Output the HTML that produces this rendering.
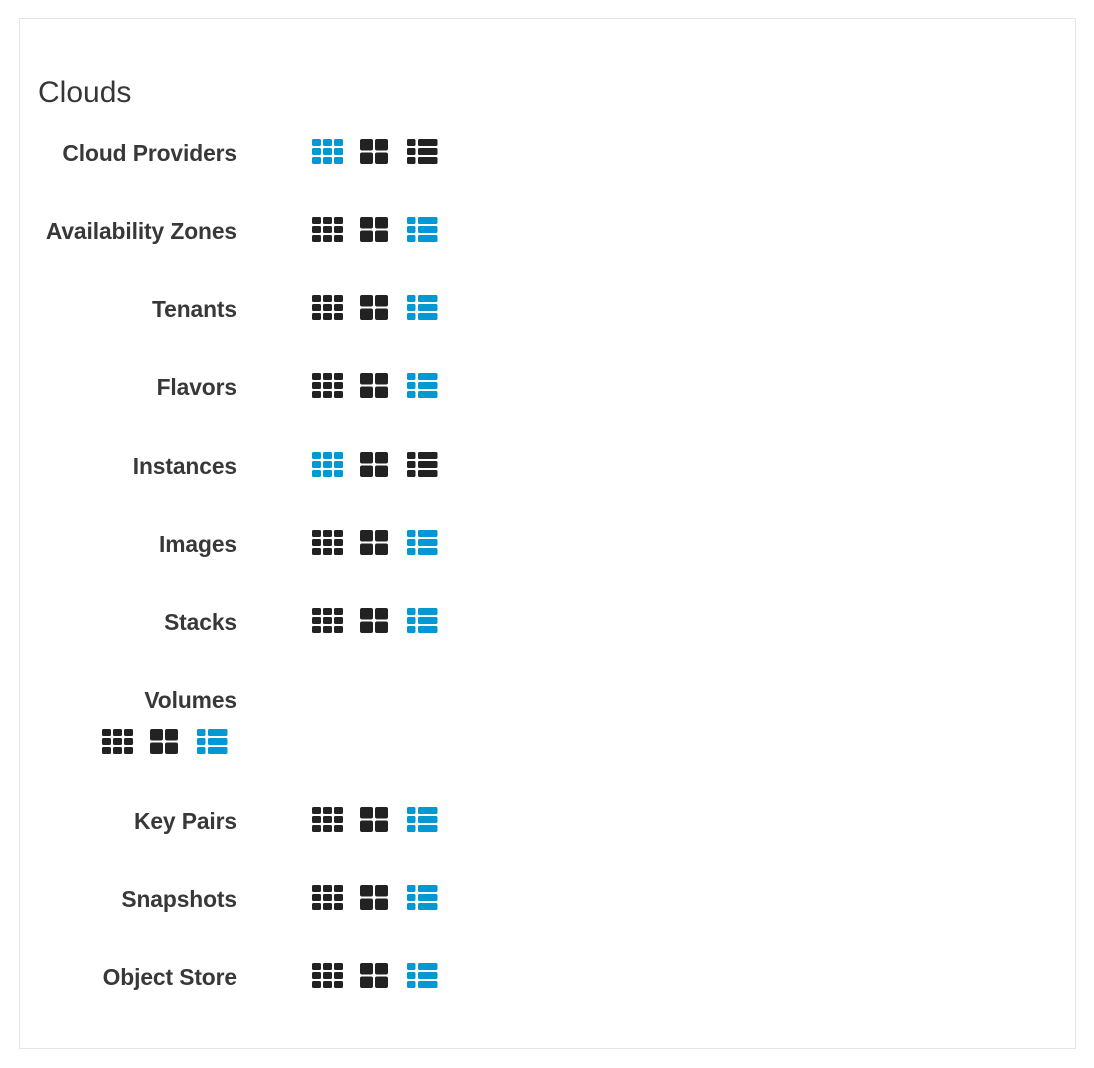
<!DOCTYPE html>
<html><head><meta charset="utf-8"><style>
body{margin:0;background:#fff;width:1094px;height:1068px;position:relative;font-family:"Liberation Sans",sans-serif;color:#363636}
.panel{position:absolute;left:19px;top:18px;width:1055px;height:1029px;border:1px solid #e5e5e5}
h1{position:absolute;left:38px;top:73px;margin:0;font-size:30px;font-weight:normal;line-height:40px;color:#363636}
.lbl{position:absolute;right:857px;font-size:22.8px;font-weight:bold;line-height:30px;white-space:nowrap;letter-spacing:-0.1px;color:#383838;margin-top:2px}
.ic{position:absolute;width:32px;height:25px}
</style></head><body>
<div class="panel"></div>
<h1>Clouds</h1>
<svg width="0" height="0" style="position:absolute">
<defs>
<g id="g3"><rect x="0" y="0" width="9" height="7" rx="1.5"/><rect x="11" y="0" width="9" height="7" rx="1.5"/><rect x="22" y="0" width="9" height="7" rx="1.5"/><rect x="0" y="9" width="9" height="7" rx="1.5"/><rect x="11" y="9" width="9" height="7" rx="1.5"/><rect x="22" y="9" width="9" height="7" rx="1.5"/><rect x="0" y="18" width="9" height="7" rx="1.5"/><rect x="11" y="18" width="9" height="7" rx="1.5"/><rect x="22" y="18" width="9" height="7" rx="1.5"/></g>
<g id="g2"><rect x="0" y="0" width="13" height="11.5" rx="2"/><rect x="15" y="0" width="13" height="11.5" rx="2"/><rect x="0" y="13.5" width="13" height="11.5" rx="2"/><rect x="15" y="13.5" width="13" height="11.5" rx="2"/></g>
<g id="gl"><rect x="0" y="0" width="8.5" height="7" rx="1.5"/><rect x="11" y="0" width="19.5" height="7" rx="1.5"/><rect x="0" y="9" width="8.5" height="7" rx="1.5"/><rect x="11" y="9" width="19.5" height="7" rx="1.5"/><rect x="0" y="18" width="8.5" height="7" rx="1.5"/><rect x="11" y="18" width="19.5" height="7" rx="1.5"/></g>
</defs></svg>

<div class="lbl" style="top:136px">Cloud Providers</div>
<svg class="ic" style="left:312px;top:139px" fill="#0099d3"><use href="#g3"/></svg>
<svg class="ic" style="left:360px;top:139px" fill="#222"><use href="#g2"/></svg>
<svg class="ic" style="left:407px;top:139px" fill="#222"><use href="#gl"/></svg>

<div class="lbl" style="top:214px">Availability Zones</div>
<svg class="ic" style="left:312px;top:217px" fill="#222"><use href="#g3"/></svg>
<svg class="ic" style="left:360px;top:217px" fill="#222"><use href="#g2"/></svg>
<svg class="ic" style="left:407px;top:217px" fill="#0099d3"><use href="#gl"/></svg>

<div class="lbl" style="top:292px">Tenants</div>
<svg class="ic" style="left:312px;top:295px" fill="#222"><use href="#g3"/></svg>
<svg class="ic" style="left:360px;top:295px" fill="#222"><use href="#g2"/></svg>
<svg class="ic" style="left:407px;top:295px" fill="#0099d3"><use href="#gl"/></svg>

<div class="lbl" style="top:370px">Flavors</div>
<svg class="ic" style="left:312px;top:373px" fill="#222"><use href="#g3"/></svg>
<svg class="ic" style="left:360px;top:373px" fill="#222"><use href="#g2"/></svg>
<svg class="ic" style="left:407px;top:373px" fill="#0099d3"><use href="#gl"/></svg>

<div class="lbl" style="top:449px">Instances</div>
<svg class="ic" style="left:312px;top:452px" fill="#0099d3"><use href="#g3"/></svg>
<svg class="ic" style="left:360px;top:452px" fill="#222"><use href="#g2"/></svg>
<svg class="ic" style="left:407px;top:452px" fill="#222"><use href="#gl"/></svg>

<div class="lbl" style="top:527px">Images</div>
<svg class="ic" style="left:312px;top:530px" fill="#222"><use href="#g3"/></svg>
<svg class="ic" style="left:360px;top:530px" fill="#222"><use href="#g2"/></svg>
<svg class="ic" style="left:407px;top:530px" fill="#0099d3"><use href="#gl"/></svg>

<div class="lbl" style="top:605px">Stacks</div>
<svg class="ic" style="left:312px;top:608px" fill="#222"><use href="#g3"/></svg>
<svg class="ic" style="left:360px;top:608px" fill="#222"><use href="#g2"/></svg>
<svg class="ic" style="left:407px;top:608px" fill="#0099d3"><use href="#gl"/></svg>

<div class="lbl" style="top:683px">Volumes</div>
<svg class="ic" style="left:102px;top:729px" fill="#222"><use href="#g3"/></svg>
<svg class="ic" style="left:150px;top:729px" fill="#222"><use href="#g2"/></svg>
<svg class="ic" style="left:197px;top:729px" fill="#0099d3"><use href="#gl"/></svg>

<div class="lbl" style="top:804px">Key Pairs</div>
<svg class="ic" style="left:312px;top:807px" fill="#222"><use href="#g3"/></svg>
<svg class="ic" style="left:360px;top:807px" fill="#222"><use href="#g2"/></svg>
<svg class="ic" style="left:407px;top:807px" fill="#0099d3"><use href="#gl"/></svg>

<div class="lbl" style="top:882px">Snapshots</div>
<svg class="ic" style="left:312px;top:885px" fill="#222"><use href="#g3"/></svg>
<svg class="ic" style="left:360px;top:885px" fill="#222"><use href="#g2"/></svg>
<svg class="ic" style="left:407px;top:885px" fill="#0099d3"><use href="#gl"/></svg>

<div class="lbl" style="top:960px">Object Store</div>
<svg class="ic" style="left:312px;top:963px" fill="#222"><use href="#g3"/></svg>
<svg class="ic" style="left:360px;top:963px" fill="#222"><use href="#g2"/></svg>
<svg class="ic" style="left:407px;top:963px" fill="#0099d3"><use href="#gl"/></svg>
</body></html>
